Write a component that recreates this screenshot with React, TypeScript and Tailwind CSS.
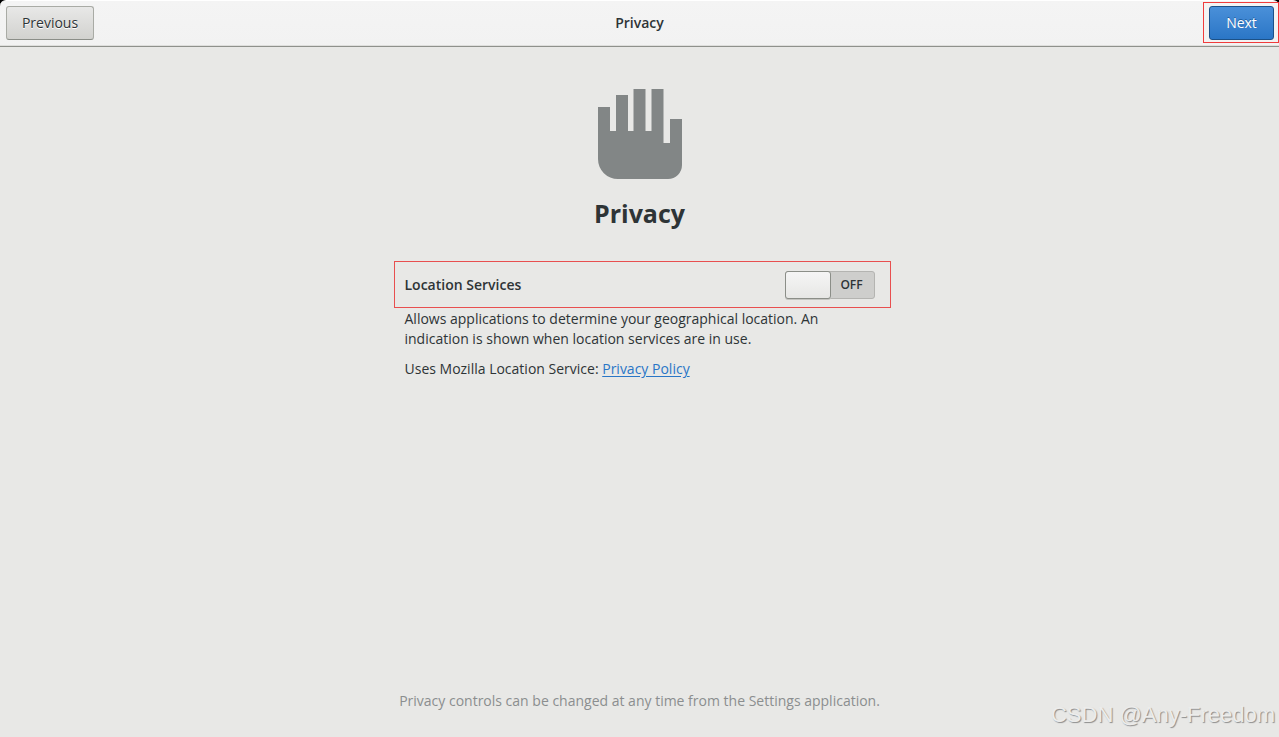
import { useState } from 'react'

function HandIcon() {
    return (
        <svg width="86" height="92" viewBox="0 0 86 92" fill="#828686" aria-hidden="true">
            <path d="M1 19h12v24h6V7h12v36h5.5V1h12v42h6V1h12v54h6.5V31h12v46a14 14 0 0 1-14 14H21A20 20 0 0 1 1 71Z" />
        </svg>
    )
}

function LocationSwitch({
    checked,
    onChange,
}: {
    checked: boolean
    onChange: (value: boolean) => void
}) {
    return (
        <div className="relative flex h-7 w-[90px] rounded-[3px] border border-[#b4b4b1] bg-[#cececc]">
            <input
                id="location"
                type="checkbox"
                role="switch"
                checked={checked}
                onChange={(e) => onChange(e.target.checked)}
                className="absolute inset-0 appearance-none rounded-[3px]"
            />
            <span
                className={
                    checked
                        ? 'pointer-events-none absolute -inset-y-px -right-px w-[46px] rounded-[3px] border border-[#8b8e88] bg-linear-to-b from-[#f5f5f5] to-[#e7e7e5]'
                        : 'pointer-events-none absolute -inset-y-px -left-px w-[46px] rounded-[3px] border border-[#8b8e88] bg-linear-to-b from-[#f5f5f5] to-[#e7e7e5] shadow-[0_1px_0_#c4c4c0]'
                }
            />
            <span
                className={
                    checked
                        ? 'pointer-events-none mr-auto w-11 text-center text-xs leading-[26px] font-semibold'
                        : 'pointer-events-none ml-auto w-11 text-center text-xs leading-[26px] font-semibold'
                }
            >
                {checked ? 'ON' : 'OFF'}
            </span>
        </div>
    )
}

export default function App() {
    const [location, setLocation] = useState(false)

    return (
        <div className="flex min-h-screen flex-col bg-[#e8e8e6] font-['Open_Sans','Noto_Sans',sans-serif] text-sm text-[#2e3436]">
            {/* Header bar */}
            <div className="bg-black">
                <header className="grid h-[47px] grid-cols-[1fr_auto_1fr] items-start rounded-t-md border-t border-b border-t-white border-b-[#8f918c] bg-linear-to-b from-[#f4f4f4] to-[#f2f2f2] shadow-[inset_0_-1px_0_#dededc]">
                    <button
                        type="button"
                        className="mt-[5px] ml-1.5 h-[34px] w-[88px] justify-self-start rounded-[3px] border border-[#a9aba5] border-b-[#8b8e88] bg-linear-to-b from-[#e8e8e7] to-[#d2d2cf] [text-shadow:0_1px_0_#ffffff]"
                    >
                        Previous
                    </button>
                    <h1 className="leading-[44px] font-semibold">Privacy</h1>
                    <div className="mt-px justify-self-end border border-[#f03c3c] pt-[3px] pr-1 pb-0.5 pl-[5px]">
                        <button
                            type="button"
                            className="block h-[34px] w-[65px] rounded-[3px] border border-[#1c5187] bg-linear-to-b from-[#4a90d9] to-[#2a76c6] text-white [text-shadow:0_-1px_0_#1f5f9f]"
                        >
                            Next
                        </button>
                    </div>
                </header>
            </div>

            {/* Content */}
            <main className="mx-auto flex w-full max-w-[470px] flex-1 flex-col pt-[41px] pb-[26px]">
                <div className="flex flex-col items-center">
                    <HandIcon />
                    <h2 className="mt-[15px] text-[25px] leading-9 font-bold">Privacy</h2>
                </div>

                <div className="mt-[30px] -mr-4 -ml-[11px] flex h-[47px] items-center justify-between border border-[#e84f4f] pr-[15px] pl-2.5">
                    <label htmlFor="location" className="font-semibold">
                        Location Services
                    </label>
                    <LocationSwitch checked={location} onChange={setLocation} />
                </div>

                <p className="mt-px w-[420px] leading-5">
                    Allows applications to determine your geographical location. An indication is
                    shown when location services are in use.
                </p>
                <p className="mt-2.5 leading-5">
                    Uses Mozilla Location Service:{' '}
                    <a href="#privacy-policy" className="text-[#2a76c6] underline underline-offset-2">
                        Privacy Policy
                    </a>
                </p>

                <p className="-mx-2 mt-auto text-center leading-5 text-[#8b8e8f]">
                    Privacy controls can be changed at any time from the Settings application.
                </p>
            </main>

            {/* Watermark */}
            <div className="pointer-events-none absolute right-1 bottom-1.5 font-['Liberation_Sans',Arial,sans-serif] text-[22px] leading-8 text-[#ececeb] [text-shadow:1px_1px_1px_#8c8c8c]">
                CSDN @Any-Freedom
            </div>
        </div>
    )
}
